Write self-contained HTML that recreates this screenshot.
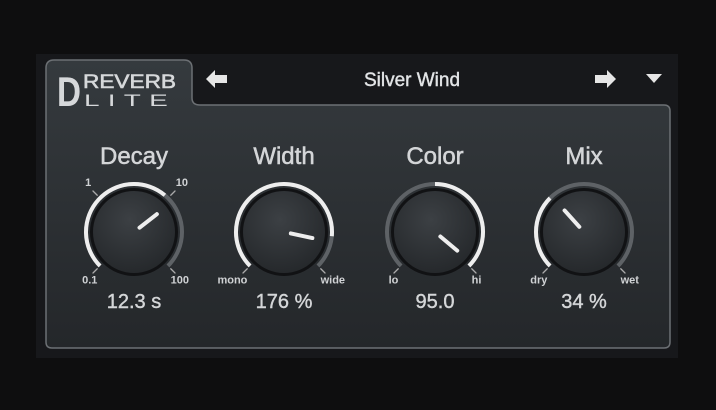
<!DOCTYPE html>
<html><head><meta charset="utf-8"><style>
html,body{margin:0;padding:0;background:#0e0e0f;width:716px;height:410px;overflow:hidden;font-family:"Liberation Sans",sans-serif}
</style></head><body>
<svg id="s" width="716" height="410" viewBox="0 0 716 410" xmlns="http://www.w3.org/2000/svg" style="position:absolute;left:0;top:0">
<defs>
<linearGradient id="pg" x1="0" y1="0" x2="0" y2="1"><stop offset="0" stop-color="#353a3e"/><stop offset="1" stop-color="#24272a"/></linearGradient>
<radialGradient id="kg" cx="0.45" cy="0.35" r="0.7"><stop offset="0" stop-color="#3c4044"/><stop offset="1" stop-color="#24272a"/></radialGradient>
</defs>
<rect x="36" y="54" width="642" height="304" fill="#17181b"/>
<path d="M46,105 L46,68 Q46,60 54,60 L184,60 Q192,60 192,68 L192,98 Q192,105 200,105 L664,105 Q670,105 670,111 L670,342 Q670,348 664,348 L52,348 Q46,348 46,342 Z" fill="url(#pg)" stroke="#6c7074" stroke-width="1.5"/>
<text x="57" y="106" font-size="42" font-weight="bold" fill="#d6d8da" textLength="24" lengthAdjust="spacingAndGlyphs">D</text>
<text x="83" y="88" font-size="19" fill="#d6d8da" stroke="#d6d8da" stroke-width="0.6" textLength="93" lengthAdjust="spacingAndGlyphs">REVERB</text>
<text x="84" y="106" font-size="17" fill="#d6d8da" letter-spacing="5" textLength="92" lengthAdjust="spacingAndGlyphs">LITE</text>
<path d="M206,79 L215,70 L215,75 L227,75 L227,83 L215,83 L215,88 Z" fill="#e6e6e6"/>
<path d="M616,79 L607,70 L607,75 L595,75 L595,83 L607,83 L607,88 Z" fill="#e6e6e6"/>
<path d="M646,74 L662,74 L654,83 Z" fill="#e6e6e6"/>
<text x="412" y="86" font-size="19" fill="#e2e4e6" stroke="#e2e4e6" stroke-width="0.4" text-anchor="middle">Silver Wind</text>
<g id="k"></g>
</svg>
<script>
var N="http://www.w3.org/2000/svg",g=document.getElementById('k');
function P(cx,cy,r,a){a=a*Math.PI/180;return [cx+r*Math.sin(a),cy-r*Math.cos(a)];}
function arc(cx,cy,r,a0,a1,col,w){var p0=P(cx,cy,r,a0),p1=P(cx,cy,r,a1);var e=document.createElementNS(N,'path');
e.setAttribute('d','M'+p0+' A'+r+','+r+' 0 '+((a1-a0)>180?1:0)+' 1 '+p1);e.setAttribute('fill','none');e.setAttribute('stroke',col);e.setAttribute('stroke-width',w);g.appendChild(e);}
function el(t,a,txt){var e=document.createElementNS(N,t);for(var k in a)e.setAttribute(k,a[k]);if(txt)e.textContent=txt;g.appendChild(e);}
function line(a,b,c,w){el('line',{x1:a[0],y1:a[1],x2:b[0],y2:b[1],stroke:c,'stroke-width':w,'stroke-linecap':'round'});}
var K=[
{x:134,t:'Decay',v:'12.3 s',ang:52,w0:-135,w1:40,l:[['0.1',-135],['1',-45],['10',45],['100',135]]},
{x:284,t:'Width',v:'176 %',ang:102,w0:-135,w1:95,l:[['mono',-135],['wide',135]]},
{x:435,t:'Color',v:'95.0',ang:130,w0:0,w1:135,l:[['lo',-135],['hi',135]]},
{x:584,t:'Mix',v:'34 %',ang:-42,w0:-135,w1:-45,l:[['dry',-135],['wet',135]]}];
K.forEach(function(k){var cx=k.x,cy=232;
el('text',{x:cx,y:164,'font-size':24,fill:'#d4d6d8',stroke:'#d4d6d8','stroke-width':0.5,'text-anchor':'middle'},k.t);
arc(cx,cy,48,-135,135,'#5e6266',4);
arc(cx,cy,48,k.w0,k.w1,'#eeeeee',4);
el('circle',{cx:cx,cy:cy,r:44,fill:'#111214'});
el('circle',{cx:cx,cy:cy,r:41,fill:'url(#kg)'});
line(P(cx,cy,7,k.ang),P(cx,cy,29,k.ang),'#eeeeee',4);
k.l.forEach(function(l){line(P(cx,cy,52,l[1]),P(cx,cy,58,l[1]),'#aaaaaa',1.3);
var p=P(cx,cy,62,l[1]);var dx=l[1]<0?-2:4;var dy=-2;
var anc=Math.abs(l[1])>90?(l[1]<0?'end':'start'):'middle';
if(Math.abs(l[1])>90){p=P(cx,cy,56,l[1]);dy=12;dx=l[1]<0?3:-3;}
el('text',{x:p[0]+dx,y:p[1]+dy,'font-size':11,'font-weight':'bold',fill:'#d0d2d4','text-anchor':anc},l[0]);});
el('text',{x:cx,y:308,'font-size':20,fill:'#d4d6d8',stroke:'#d4d6d8','stroke-width':0.4,'text-anchor':'middle'},k.v);
});
</script>
</body></html>
